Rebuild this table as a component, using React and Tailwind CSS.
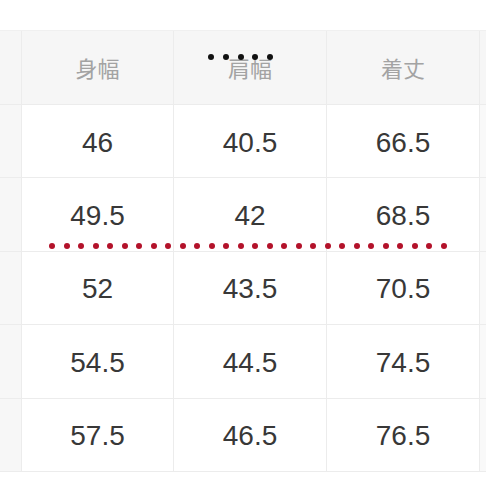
const header = ["身幅", "肩幅", "着丈"];
const rows = [
  ["46", "40.5", "66.5"],
  ["49.5", "42", "68.5"],
  ["52", "43.5", "70.5"],
  ["54.5", "44.5", "74.5"],
  ["57.5", "46.5", "76.5"],
];

function Dots({ count, gap, size, color, className }) {
  return (
    <div className={`absolute flex items-center pointer-events-none ${className}`} style={{ gap }}>
      {Array.from({ length: count }).map((_, i) => (
        <span key={i} className={`block rounded-full ${color}`} style={{ width: size, height: size }} />
      ))}
    </div>
  );
}

export default function App() {
  return (
    <div className="relative w-[486px] h-[486px] bg-white overflow-hidden" style={{ fontFamily: '"Liberation Sans", "Noto Sans CJK JP", sans-serif' }}>
      <div className="h-[31px] border-b border-[#f0f0f0]" />

      {/* header */}
      <div className="grid grid-cols-[22px_152px_153px_153px_1fr] h-[74px] bg-[#f6f6f6] border-b border-[#ececec]">
        <div className="border-r border-[#ececec]" />
        {header.map((h) => (
          <div key={h} className="flex items-center justify-center border-r border-[#ececec] text-[22px] text-[#a3a3a3]" style={{ fontFamily: '"Noto Sans CJK JP", sans-serif' }}>
            {h}
          </div>
        ))}
        <div />
      </div>

      {/* body */}
      {rows.map((r, i) => (
        <div key={i} className="grid grid-cols-[22px_152px_153px_153px_1fr] h-[73.4px] border-b border-[#ececec]">
          <div className="bg-[#f7f7f7] border-r border-[#ececec]" />
          {r.map((v, j) => (
            <div key={j} className="flex items-center justify-center pt-[3px] bg-white border-r border-[#ececec] text-[28px] text-[#383838]">
              {v}
            </div>
          ))}
          <div className="bg-[#f9f9f9]" />
        </div>
      ))}

      {/* black dots over header */}
      <Dots count={5} gap="8.8px" size="6px" color="bg-[#111111]" className="left-[208px] top-[54px]" />
      {/* red dotted line */}
      <Dots count={28} gap="8.5px" size="6px" color="bg-[#b3122a]" className="left-[49px] top-[243px]" />
    </div>
  );
}
